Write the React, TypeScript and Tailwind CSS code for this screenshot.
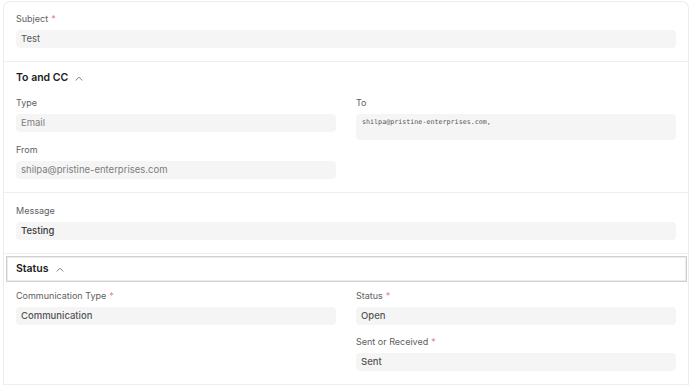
import type { ReactNode } from "react";

const FONT = { fontFamily: "Inter, 'Noto Sans', sans-serif" };

function Caret() {
  return (
    <svg width="8" height="5" viewBox="0 0 8 5" fill="none" className="ml-[7px]">
      <path d="M1 4.2 L4 1.2 L7 4.2" stroke="#6b6b6b" strokeWidth="0.9" strokeLinecap="round" strokeLinejoin="round" />
    </svg>
  );
}

function Label({ children, required }: { children: ReactNode; required?: boolean }) {
  return (
    <div className="mb-[5px] h-[12px] text-[9px] leading-[12px] text-[#606060]">
      {children}
      {required && <span className="ml-[3px] text-[#ec7a7a]">*</span>}
    </div>
  );
}

function Input({
  value,
  tone = "normal",
}: {
  value: string;
  tone?: "normal" | "muted" | "strong" | "medium";
}) {
  const color =
    tone === "muted"
      ? "text-[#7d7d7d]"
      : tone === "strong"
        ? "font-medium text-[#3a3a3a]"
        : tone === "medium"
          ? "font-medium text-[#565656]"
          : "text-[#585858]";
  return (
    <div className={`flex h-[18px] items-center rounded-[4px] bg-[#f5f5f5] px-[5px] text-[9.5px] ${color}`}>
      {value}
    </div>
  );
}

function Field({ label, required, children }: { label: string; required?: boolean; children: ReactNode }) {
  return (
    <div>
      <Label required={required}>{label}</Label>
      {children}
    </div>
  );
}

function SectionHead({ title }: { title: string }) {
  return (
    <div className="flex h-[14px] items-center text-[10.5px] font-semibold leading-[14px] text-[#1c1c1c]">
      {title}
      <Caret />
    </div>
  );
}

export default function App() {
  return (
    <div className="h-[391px] w-[690px] overflow-hidden bg-white" style={FONT}>
      <div className="ml-[3px] mt-[1px] w-[686px] rounded-t-[7px] border border-b-0 border-[#ececec]">
        {/* Subject */}
        <div className="px-[12px] pb-[13px] pt-[11px]">
          <Field label="Subject" required>
            <Input value="Test" />
          </Field>
        </div>

        {/* To and CC */}
        <div className="border-t border-[#efefef] px-[12px] pb-[13px] pt-[9px]">
          <SectionHead title="To and CC" />
          <div className="mt-[12px] grid grid-cols-2 gap-x-[20px]">
            <div className="flex flex-col gap-[12px]">
              <Field label="Type">
                <Input value="Email" tone="muted" />
              </Field>
              <Field label="From">
                <Input value="shilpa@pristine-enterprises.com" tone="muted" />
              </Field>
            </div>
            <div>
              <Field label="To">
                <div
                  className="h-[26px] rounded-[4px] bg-[#f5f5f5] px-[6px] pt-[3px] text-[6.7px] leading-[10px] text-[#555]"
                  style={{ fontFamily: "'DejaVu Sans Mono', 'Liberation Mono', monospace" }}
                >
                  shilpa@pristine-enterprises.com,
                </div>
              </Field>
            </div>
          </div>
        </div>

        {/* Message */}
        <div className="border-t border-[#efefef] px-[12px] pb-[13px] pt-[12px]">
          <Field label="Message">
            <Input value="Testing" tone="strong" />
          </Field>
        </div>

        {/* Status */}
        <div className="border-t border-[#efefef] pb-[13px] pt-[2px]">
          <div className="ml-[2px] mr-[1px] flex h-[26px] items-center border border-[#cfcfcf] px-[9px] shadow-[inset_0_0_0_1px_#ececec]">
            <SectionHead title="Status" />
          </div>
          <div className="mt-[8px] grid grid-cols-2 gap-x-[20px] px-[12px]">
            <div>
              <Field label="Communication Type" required>
                <Input value="Communication" tone="medium" />
              </Field>
            </div>
            <div className="flex flex-col gap-[11px]">
              <Field label="Status" required>
                <Input value="Open" tone="medium" />
              </Field>
              <Field label="Sent or Received" required>
                <Input value="Sent" tone="medium" />
              </Field>
            </div>
          </div>
        </div>
        <div className="border-t border-[#efefef]" />
      </div>
    </div>
  );
}
